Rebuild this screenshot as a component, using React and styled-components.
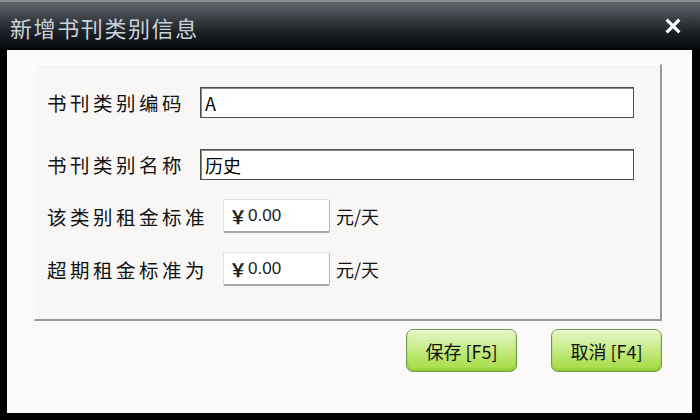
import React from 'react'
import styled, { createGlobalStyle } from 'styled-components'

const GlobalStyle = createGlobalStyle`
  html, body {
    margin: 0;
    padding: 0;
    background: #000;
  }
  body {
    font-family: "Noto Sans CJK SC", "Liberation Sans", sans-serif;
  }
`

const fields = [
  { label: '书刊类别编码', value: 'A', gap: 22 },
  { label: '书刊类别名称', value: '历史', gap: 31 },
]

const rents = [
  { label: '该类别租金标准', gap: 19 },
  { label: '超期租金标准为', gap: 19 },
]

function CloseIcon() {
  return (
    <svg width="16" height="16" viewBox="0 0 16 16">
      <path d="M2.8 2.8 L13.2 13.2 M13.2 2.8 L2.8 13.2" stroke="#fff" strokeWidth="3.2" strokeLinecap="square" />
    </svg>
  )
}

function App() {
  return (
    <>
      <GlobalStyle />
      <Window>
        <TitleBar>
          <Title>新增书刊类别信息</Title>
          <CloseButton>
            <CloseIcon />
          </CloseButton>
        </TitleBar>

        <Body>
          <Group>
            {fields.map((f) => (
              <Row key={f.label} $gap={f.gap}>
                <Label>{f.label}</Label>
                <TextBox>{f.value}</TextBox>
              </Row>
            ))}
            {rents.map((r) => (
              <Row key={r.label} $gap={r.gap}>
                <Label>{r.label}</Label>
                <MoneyBox>
                  <Yen>￥</Yen>0.00
                </MoneyBox>
                <Unit>元/天</Unit>
              </Row>
            ))}
          </Group>

          <Buttons>
            <GreenButton>保存 [F5]</GreenButton>
            <GreenButton>取消 [F4]</GreenButton>
          </Buttons>
        </Body>
      </Window>
    </>
  )
}

export default App

const Window = styled.div`
  width: 700px;
  height: 420px;
  display: flex;
  flex-direction: column;
  background: #000;
  overflow: hidden;
`

const TitleBar = styled.div`
  height: 49px;
  flex-shrink: 0;
  display: flex;
  align-items: center;
  justify-content: space-between;
  padding: 0 19px 0 10px;
  box-sizing: border-box;
  border-top: 2px solid #8a8e92;
  background: linear-gradient(to bottom, #5f646a 0%, #40454b 30%, #1c2025 65%, #06080b 100%);
`

const Title = styled.div`
  color: #c9d2dc;
  font-size: 22px;
  letter-spacing: 1.6px;
  margin-top: 2px;
`

const CloseButton = styled.div`
  display: flex;
  align-items: center;
  margin-top: 1px;
`

const Body = styled.div`
  flex: 1;
  margin: 1px 8px 7px 7px;
  background: #fbfaf8;
  padding: 14px 30px 0 27px;
  display: flex;
  flex-direction: column;
`

const Group = styled.div`
  height: 257px;
  box-sizing: border-box;
  background: #f8f7f5;
  border-top: 1px solid #ffffff;
  border-left: 1px solid #ffffff;
  border-right: 2px solid #9a9a9a;
  border-bottom: 2px solid #9a9a9a;
  padding-left: 12px;
`

const Row = styled.div`
  display: flex;
  align-items: center;
  margin-top: ${(p) => p.$gap}px;
`

const Label = styled.span`
  font-size: 19.5px;
  letter-spacing: 3.5px;
  color: #111;
  margin-right: 15px;
  white-space: nowrap;
`

const TextBox = styled.div`
  width: 434px;
  height: 31px;
  box-sizing: border-box;
  background: #fff;
  border: 1px solid #4e4e4e;
  box-shadow: inset 1px 1px 0 #8a8a8a;
  padding: 0 4px;
  display: flex;
  align-items: center;
  font-size: 18px;
  color: #000;
`

const MoneyBox = styled.div`
  width: 107px;
  height: 34px;
  box-sizing: border-box;
  background: #fff;
  border: 1px solid #e2e2e2;
  border-right-color: #b8b8b8;
  border-bottom: 2px solid #a8a8a8;
  border-radius: 2px;
  padding: 0 5px;
  display: flex;
  align-items: center;
  font-family: "Liberation Sans", sans-serif;
  font-size: 17px;
  color: #222;
`

const Yen = styled.span`
  font-family: "Noto Sans CJK SC", sans-serif;
  font-weight: 700;
  font-size: 18px;
  margin-right: 1px;
`

const Unit = styled.span`
  font-size: 18px;
  color: #111;
  margin-left: 6px;
`

const Buttons = styled.div`
  display: flex;
  justify-content: flex-end;
  gap: 34px;
  margin-top: 8px;
`

const GreenButton = styled.div`
  width: 111px;
  height: 43px;
  box-sizing: border-box;
  border: 1px solid #6f9a48;
  border-radius: 7px;
  background: linear-gradient(to bottom, #e6f6c8 0%, #c8ec8a 45%, #b0e058 80%, #a6dc48 100%);
  box-shadow: inset 0 1px 0 #f4fbe6, inset 0 -2px 2px rgba(130, 190, 40, 0.6);
  display: flex;
  align-items: center;
  justify-content: center;
  font-size: 18px;
  color: #111;
`
